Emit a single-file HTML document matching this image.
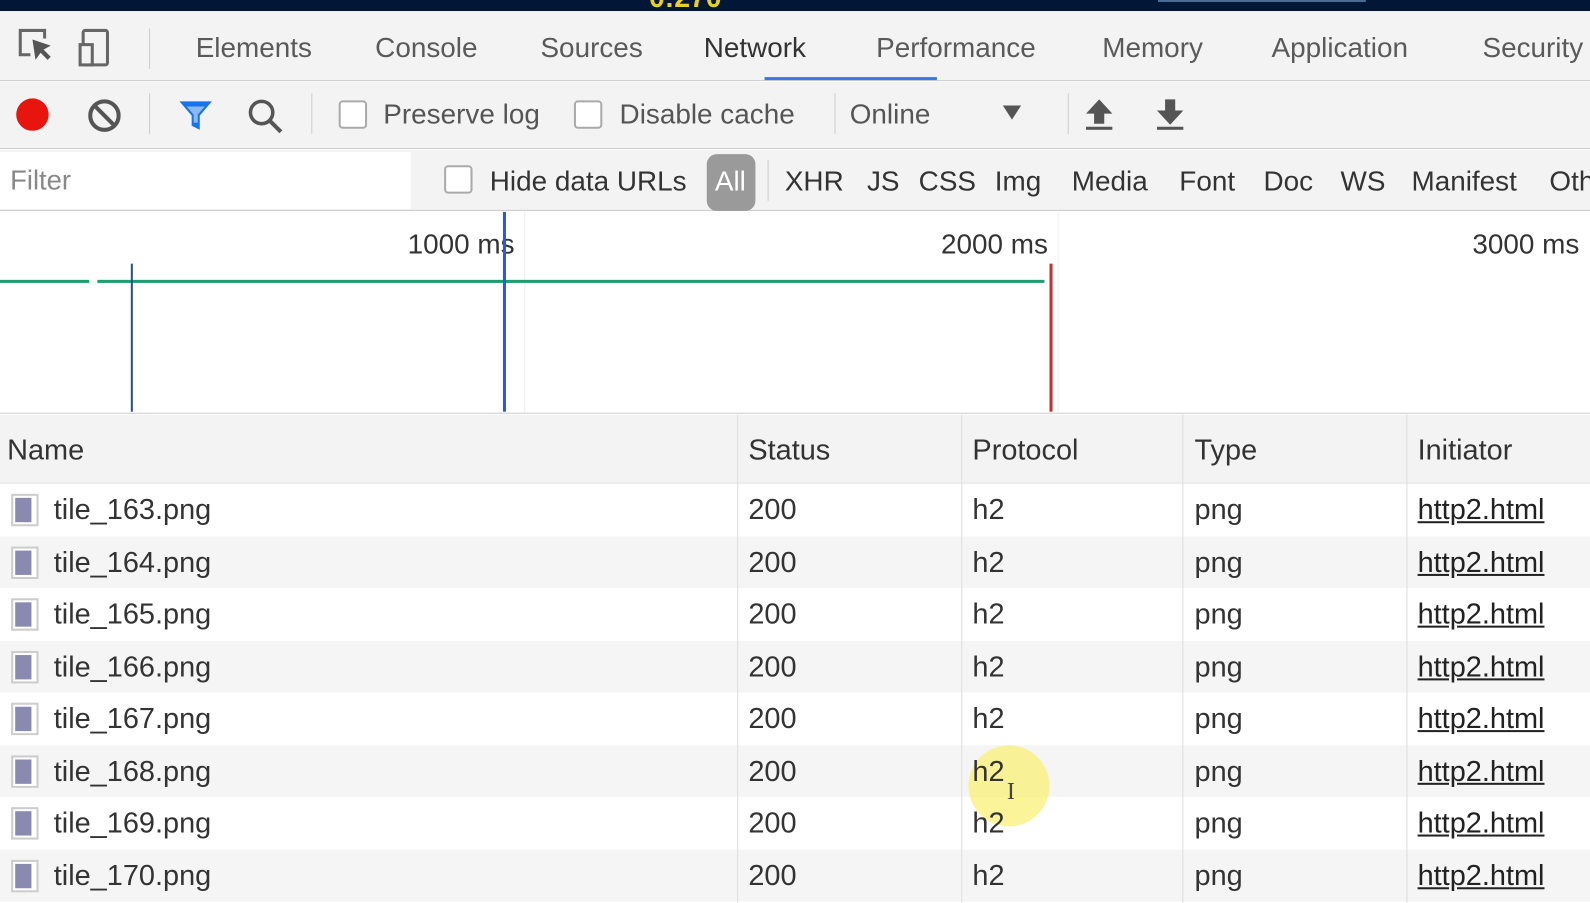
<!DOCTYPE html>
<html><head><meta charset="utf-8"><style>
*{margin:0;padding:0;box-sizing:border-box}
body{width:1590px;height:891px;overflow:hidden;background:#fff;font-family:"Liberation Sans",sans-serif;color:#333;position:relative}
#w{position:absolute;left:0;top:0;width:1568px;height:879px;transform:scale(1.014);transform-origin:0 0}
.a{position:absolute;white-space:nowrap}
.t{font-size:27.5px;color:#5a5a5a;top:31px}
.f{font-size:27.5px;color:#333;top:163px}
.r{position:absolute;left:0;width:1590px;height:51.5px}
.c{position:absolute;font-size:28.5px;color:#333;white-space:nowrap}
.u{text-decoration:underline;color:#222}
.vs{position:absolute;width:1px;background:#ddd}
.cb{position:absolute;width:28px;height:28px;border:2px solid #aaa;border-radius:4px;background:#fff}
</style></head><body><div id="w">
<div class="a" style="left:0;top:0;width:1590px;height:11px;background:#021638"></div>
<div class="a" style="left:640px;top:-18px;font-size:28px;font-weight:bold;color:#e8d020">0:270</div>
<div class="a" style="left:1142px;top:0;width:205px;height:2px;background:#4a6a90"></div>
<div class="a" style="left:0;top:11px;width:1590px;height:69px;background:#f3f3f3;border-bottom:1px solid #ccc"></div>
<svg class="a" style="left:14px;top:26px" width="110" height="42"><path d="M16 28H6V4h24v8" fill="none" stroke="#666" stroke-width="3"/><path d="M18 13l3 20 5-7 7 7 3-3-7-7 7-4z" fill="#555"/><rect x="68" y="4" width="24" height="34" rx="2" fill="none" stroke="#666" stroke-width="3"/><rect x="65" y="18" width="12" height="20" fill="#f3f3f3" stroke="#666" stroke-width="3"/></svg>
<div class="vs" style="left:147px;top:28px;height:40px;background:#ccc"></div>
<div class="a t" style="left:193px">Elements</div>
<div class="a t" style="left:370px">Console</div>
<div class="a t" style="left:533px">Sources</div>
<div class="a t" style="left:694px;color:#333">Network</div>
<div class="a" style="left:754px;top:76px;width:170px;height:3px;background:#3b78e7"></div>
<div class="a t" style="left:864px">Performance</div>
<div class="a t" style="left:1087px">Memory</div>
<div class="a t" style="left:1254px">Application</div>
<div class="a t" style="left:1462px">Security</div>
<div class="a" style="left:0;top:81px;width:1590px;height:66px;background:#f3f3f3;border-bottom:1px solid #ccc"></div>
<div class="a" style="left:16px;top:97px;width:32px;height:32px;border-radius:50%;background:#e8140e"></div>
<svg class="a" style="left:85px;top:96px" width="36" height="36"><circle cx="18" cy="18" r="14" fill="none" stroke="#555" stroke-width="4"/><path d="M8 8l20 20" stroke="#555" stroke-width="4"/></svg>
<div class="vs" style="left:147px;top:92px;height:40px;background:#ccc"></div>
<svg class="a" style="left:175px;top:98px" width="36" height="32"><path d="M2 2h32L22 16v14l-8-4V16z" fill="#1a73e8"/><path d="M9 7h18l-7 8v8h-4v-8z" fill="#8ab8f0"/></svg>
<svg class="a" style="left:243px;top:96px" width="38" height="38"><circle cx="15" cy="15" r="11" fill="none" stroke="#555" stroke-width="3.5"/><path d="M23 23l11 11" stroke="#555" stroke-width="4"/></svg>
<div class="vs" style="left:307px;top:92px;height:40px;background:#ccc"></div>
<div class="cb" style="left:334px;top:99px"></div>
<div class="a" style="left:378px;top:97px;font-size:27.5px;color:#555">Preserve log</div>
<div class="cb" style="left:566px;top:99px"></div>
<div class="a" style="left:611px;top:97px;font-size:27.5px;color:#555">Disable cache</div>
<div class="vs" style="left:823px;top:92px;height:40px;background:#ccc"></div>
<div class="a" style="left:838px;top:97px;font-size:27.5px;color:#555">Online</div>
<div class="a" style="left:989px;top:104px;width:0;height:0;border-left:9px solid transparent;border-right:9px solid transparent;border-top:14px solid #555"></div>
<div class="vs" style="left:1053px;top:92px;height:40px;background:#ccc"></div>
<svg class="a" style="left:1068px;top:96px" width="32" height="34"><path d="M16 2L3 16h8v10h10V16h8z" fill="#555"/><rect x="3" y="29" width="26" height="3" fill="#555"/></svg>
<svg class="a" style="left:1138px;top:96px" width="32" height="34"><path d="M16 27L3 13h8V2h10v11h8z" fill="#555"/><rect x="3" y="29" width="26" height="3" fill="#555"/></svg>
<div class="a" style="left:0;top:148px;width:1590px;height:60px;background:#f3f3f3;border-bottom:1px solid #ccc"></div>
<div class="a" style="left:0;top:150px;width:405px;height:56px;background:#fff"></div>
<div class="a" style="left:10px;top:163px;font-size:27px;color:#888">Filter</div>
<div class="cb" style="left:438px;top:163px"></div>
<div class="a f" style="left:483px">Hide data URLs</div>
<div class="a" style="left:697px;top:152px;width:48px;height:56px;border-radius:10px;background:#9a9a9a"></div>
<div class="a f" style="left:705px;color:#fff">All</div>
<div class="vs" style="left:757px;top:158px;height:40px;background:#ccc"></div>
<div class="a f" style="left:774px">XHR</div>
<div class="a f" style="left:855px">JS</div>
<div class="a f" style="left:906px">CSS</div>
<div class="a f" style="left:981px">Img</div>
<div class="a f" style="left:1057px">Media</div>
<div class="a f" style="left:1163px">Font</div>
<div class="a f" style="left:1246px">Doc</div>
<div class="a f" style="left:1322px">WS</div>
<div class="a f" style="left:1392px">Manifest</div>
<div class="a f" style="left:1528px">Oth</div>
<div class="a" style="left:0;top:209px;width:1590px;height:199px;background:#fff;border-bottom:1px solid #ccc"></div>
<div class="vs" style="left:517px;top:209px;height:198px;background:#eee"></div>
<div class="vs" style="left:1043px;top:209px;height:198px;background:#eee"></div>
<div class="a" style="left:402px;top:225px;font-size:27.5px;color:#333">1000 ms</div>
<div class="a" style="left:928px;top:225px;font-size:27.5px;color:#333">2000 ms</div>
<div class="a" style="left:1452px;top:225px;font-size:27.5px;color:#333">3000 ms</div>
<div class="a" style="left:0;top:276px;width:88px;height:3px;background:#1e9e6e"></div>
<div class="a" style="left:96px;top:276px;width:934px;height:3px;background:#1e9e6e"></div>
<div class="a" style="left:129px;top:260px;width:2px;height:146px;background:#2a4a9a"></div>
<div class="a" style="left:496px;top:209px;width:3px;height:197px;background:#2b5bd8"></div>
<div class="a" style="left:1035px;top:260px;width:3px;height:146px;background:#c03030"></div>
<div class="a" style="left:0;top:409px;width:1590px;height:68px;background:#f3f3f3;border-bottom:1px solid #ddd"></div>
<div class="c" style="left:7px;top:428px">Name</div>
<div class="c" style="left:738px;top:428px">Status</div>
<div class="c" style="left:959px;top:428px">Protocol</div>
<div class="c" style="left:1178px;top:428px">Type</div>
<div class="c" style="left:1398px;top:428px">Initiator</div>
<div class="r" style="top:477px;background:#fff"></div>
<div class="r" style="top:528.5px;background:#f5f5f5"></div>
<div class="r" style="top:580px;background:#fff"></div>
<div class="r" style="top:631.5px;background:#f5f5f5"></div>
<div class="r" style="top:683px;background:#fff"></div>
<div class="r" style="top:734.5px;background:#f5f5f5"></div>
<div class="r" style="top:786px;background:#fff"></div>
<div class="r" style="top:837.5px;background:#f5f5f5"></div>
<div class="vs" style="left:727px;top:409px;height:482px"></div>
<div class="vs" style="left:948px;top:409px;height:482px"></div>
<div class="vs" style="left:1166px;top:409px;height:482px"></div>
<div class="vs" style="left:1387px;top:409px;height:482px"></div>
<div class="a" style="left:955px;top:735px;width:80px;height:80px;border-radius:50%;background:rgba(250,240,110,.7)"></div>
<div class="a" style="left:993px;top:768px;font-size:24px;color:#444;font-family:'Liberation Serif',serif">I</div>
<div id="data"></div>
</div>
<script>
var h='';for(var i=0;i<8;i++){var y=477+i*51.5;var ty=y+10;
h+='<div class="a" style="left:11px;top:'+(y+10)+'px;width:27px;height:32px;border:2px solid #ccc;background:#fff"><div style="margin:2px;width:16px;height:24px;background:#8a8ab0"></div></div>';
h+='<div class="c" style="left:53px;top:'+ty+'px">tile_'+(163+i)+'.png</div>';
h+='<div class="c" style="left:738px;top:'+ty+'px">200</div>';
h+='<div class="c" style="left:959px;top:'+ty+'px">h2</div>';
h+='<div class="c" style="left:1178px;top:'+ty+'px">png</div>';
h+='<div class="c u" style="left:1398px;top:'+ty+'px">http2.html</div>';}
document.getElementById('data').innerHTML=h;
</script>
</body></html>
